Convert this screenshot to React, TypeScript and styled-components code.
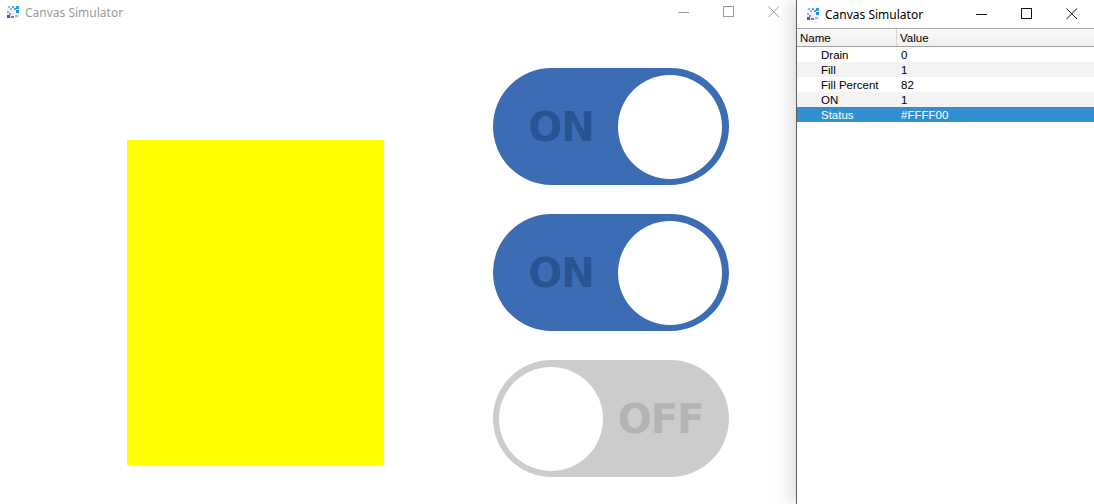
import * as React from 'react'
import styled, { createGlobalStyle } from 'styled-components'

const blue = '#3c6cb4'
const blueText = '#295494'
const offGray = '#cccccc'
const offText = '#b4b4b4'

const GlobalStyle = createGlobalStyle`
  html, body {
    margin: 0;
    padding: 0;
    background: #ffffff;
    overflow: hidden;
  }
  #root {
    width: 1094px;
    height: 504px;
  }
`

const Desktop = styled.div`
  display: flex;
  width: 1094px;
  height: 504px;
  overflow: hidden;
`

const Window = styled.div<{ side?: boolean }>`
  display: flex;
  flex-direction: column;
  background: #fff;
  height: 100%;
  ${({ side }) =>
    side
      ? `
    flex: 1;
    position: relative;
    z-index: 1;
    border-left: 1px solid #5c5c5c;
    box-shadow: -6px 0 16px rgba(0, 0, 0, 0.13);
  `
      : `
    width: 796px;
    flex-shrink: 0;
  `}
`

const TitleBar = styled.div<{ h: number; active?: boolean }>`
  display: flex;
  align-items: center;
  height: ${({ h }) => h}px;
  flex-shrink: 0;
  padding-left: ${({ active }) => (active ? 9 : 6)}px;
  font-family: 'Noto Sans', 'Open Sans', sans-serif;
  font-size: 12px;
  color: ${({ active }) => (active ? '#000' : '#9a9a9a')};
`

const TitleText = styled.span`
  margin-left: 5px;
  flex: 1;
  white-space: nowrap;
`

const Controls = styled.div`
  display: flex;
  height: 100%;
`

const CtlButton = styled.div`
  width: 45px;
  display: flex;
  align-items: center;
  justify-content: center;
`

const AppIcon = () => (
  <svg width="14" height="14" viewBox="0 0 14 14">
    <rect x="1" y="1" width="12" height="12" fill="#eef1f9" />
    <rect x="2" y="1" width="2" height="2" fill="#9bb4dc" />
    <rect x="6" y="1" width="2" height="2" fill="#5aa5d8" />
    <rect x="10" y="1" width="3" height="3" fill="#29a0d8" />
    <rect x="10" y="5" width="3" height="3" fill="#1f8fd0" />
    <rect x="4" y="3" width="2" height="2" fill="#7fc0e8" />
    <rect x="8" y="3" width="2" height="2" fill="#3fa0d8" />
    <rect x="1" y="6" width="2" height="2" fill="#b8a8d8" />
    <rect x="1" y="10" width="3" height="3" fill="#6a4aa8" />
    <rect x="5" y="11" width="3" height="2" fill="#8a6ac0" />
    <rect x="3" y="8" width="2" height="2" fill="#a08ad0" />
    <rect x="9" y="10" width="3" height="2" fill="#c0b0e0" />
  </svg>
)

const WinControls = ({ color }: { color: string }) => (
  <Controls>
    <CtlButton>
      <svg width="12" height="12" viewBox="0 0 12 12">
        <line x1="0" y1="6.5" x2="11" y2="6.5" stroke={color} strokeWidth="1" />
      </svg>
    </CtlButton>
    <CtlButton>
      <svg width="12" height="12" viewBox="0 0 12 12">
        <rect x="0.5" y="0.5" width="10" height="10" fill="none" stroke={color} strokeWidth="1" />
      </svg>
    </CtlButton>
    <CtlButton>
      <svg width="12" height="12" viewBox="0 0 12 12">
        <path d="M0.5 0.5 L11 11 M11 0.5 L0.5 11" stroke={color} strokeWidth="1" />
      </svg>
    </CtlButton>
  </Controls>
)

const Canvas = styled.div`
  flex: 1;
  display: flex;
  align-items: flex-start;
`

const Tank = styled.div`
  width: 257px;
  height: 325px;
  background: #ffff00;
  margin: 116px 0 0 127px;
`

const ToggleColumn = styled.div`
  display: flex;
  flex-direction: column;
  gap: 29px;
  margin: 44px 0 0 109px;
`

const Track = styled.div<{ on: boolean }>`
  width: 236px;
  height: 117px;
  border-radius: 59px;
  box-sizing: border-box;
  padding: 6px 7px 6px 6px;
  display: flex;
  align-items: center;
  flex-direction: ${({ on }) => (on ? 'row' : 'row-reverse')};
  background: ${({ on }) => (on ? blue : offGray)};
`

const ToggleLabel = styled.span<{ on: boolean }>`
  flex: 1;
  text-align: center;
  padding-left: ${({ on }) => (on ? 5 : 0)}px;
  padding-right: ${({ on }) => (on ? 0 : 4)}px;
  font-family: 'DejaVu Sans', sans-serif;
  font-weight: 700;
  font-size: 40px;
  letter-spacing: -1px;
  color: ${({ on }) => (on ? blueText : offText)};
`

const Knob = styled.div`
  width: 104px;
  height: 104px;
  border-radius: 50%;
  background: #fff;
  flex-shrink: 0;
`

const Toggle = ({ on }: { on: boolean }) => (
  <Track on={on}>
    <ToggleLabel on={on}>{on ? 'ON' : 'OFF'}</ToggleLabel>
    <Knob />
  </Track>
)

const Grid = styled.div`
  font-family: 'Liberation Sans', Arial, sans-serif;
  font-size: 11.5px;
  color: #000;
`

const HeaderRow = styled.div`
  display: flex;
  height: 17px;
  border-top: 1px solid #a9a9a9;
  border-bottom: 1px solid #a0a0a0;
  background: linear-gradient(#fafafa, #f0f0f0);
`

const HeaderCell = styled.div<{ w?: number }>`
  display: flex;
  align-items: center;
  padding-left: 3px;
  ${({ w }) => (w ? `width: ${w}px; border-right: 1px solid #d6d6d6;` : 'flex: 1;')}
  box-sizing: border-box;
`

const Row = styled.div<{ alt?: boolean; selected?: boolean }>`
  display: flex;
  height: 15px;
  align-items: center;
  background: ${({ alt, selected }) => (selected ? '#3390cf' : alt ? '#f3f3f3' : '#fff')};
  color: ${({ selected }) => (selected ? '#fff' : '#000')};
`

const NameCell = styled.div`
  width: 100px;
  padding-left: 24px;
  box-sizing: border-box;
  white-space: nowrap;
`

const ValueCell = styled.div`
  flex: 1;
  padding-left: 4px;
`

const props = [
  { name: 'Drain', value: '0' },
  { name: 'Fill', value: '1' },
  { name: 'Fill Percent', value: '82' },
  { name: 'ON', value: '1' },
  { name: 'Status', value: '#FFFF00' },
]

export default function App() {
  return (
    <>
      <GlobalStyle />
      <Desktop>
        <Window>
          <TitleBar h={24}>
            <AppIcon />
            <TitleText>Canvas Simulator</TitleText>
            <WinControls color="#9a9a9a" />
          </TitleBar>
          <Canvas>
            <Tank />
            <ToggleColumn>
              <Toggle on />
              <Toggle on />
              <Toggle on={false} />
            </ToggleColumn>
          </Canvas>
        </Window>
        <Window side>
          <TitleBar h={28} active>
            <AppIcon />
            <TitleText>Canvas Simulator</TitleText>
            <WinControls color="#111" />
          </TitleBar>
          <Grid>
            <HeaderRow>
              <HeaderCell w={100}>Name</HeaderCell>
              <HeaderCell>Value</HeaderCell>
            </HeaderRow>
            {props.map((p, i) => (
              <Row key={p.name} alt={i % 2 === 1} selected={i === props.length - 1}>
                <NameCell>{p.name}</NameCell>
                <ValueCell>{p.value}</ValueCell>
              </Row>
            ))}
          </Grid>
        </Window>
      </Desktop>
    </>
  )
}
